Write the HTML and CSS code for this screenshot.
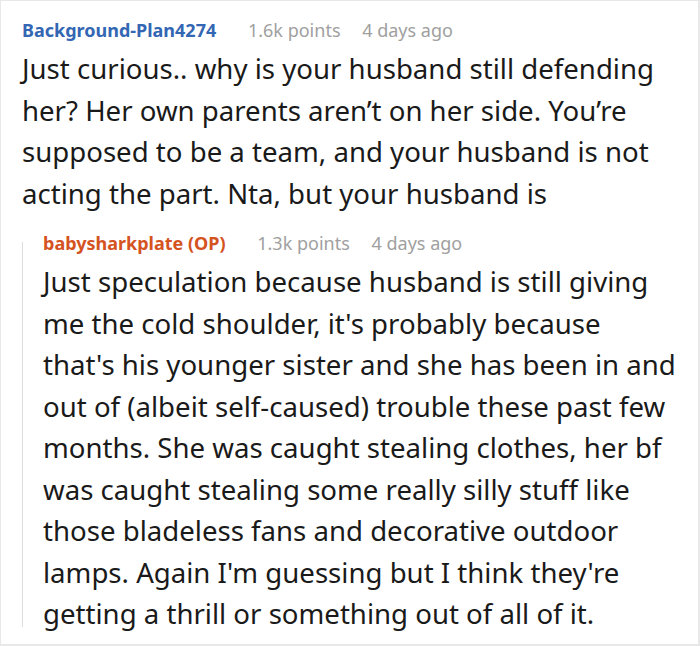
FILE: index.html
```html
<!DOCTYPE html>
<html>
<head>
<meta charset="utf-8">
<link rel="stylesheet" href="styles.css">
</head>
<body>
<div class="frame">
  <div class="comment">
    <div class="meta">
      <span class="user">Background-Plan4274</span>
      <span class="points">1.6k points</span>
      <span class="time">4 days ago</span>
    </div>
    <div class="body">Just curious.. why is your husband still defending her? Her own parents aren’t on her side. You’re supposed to be a team, and your husband is not acting the part. Nta, but your husband is</div>
    <div class="reply">
      <div class="meta">
        <span class="user op">babysharkplate (OP)</span>
        <span class="points">1.3k points</span>
        <span class="time">4 days ago</span>
      </div>
      <div class="body">Just speculation because husband is still giving me the cold shoulder, it's probably because that's his younger sister and she has been in and out of (albeit self-caused) trouble these past few months. She was caught stealing clothes, her bf was caught stealing some really silly stuff like those bladeless fans and decorative outdoor lamps. Again I'm guessing but I think they're getting a thrill or something out of all of it.</div>
    </div>
  </div>
</div>
</body>
</html>
```
FILE: styles.css
```css
html, body {
  margin: 0;
  padding: 0;
  background: #ffffff;
}
.frame {
  box-sizing: border-box;
  width: 700px;
  height: 646px;
  border: 2px solid #e8e8e8;
  border-width: 1px 2px 2px 1px;
  overflow: hidden;
  font-family: "Noto Sans", sans-serif;
  color: #1a1a1a;
}
.comment {
  padding: 16px 19px 0 21px;
}
.meta {
  font-size: 18px;
  line-height: 26px;
  white-space: nowrap;
}
.user {
  font-weight: 700;
  color: #3366b3;
}
.user.op {
  color: #d4531f;
}
.points {
  color: #a0a0a0;
  margin-left: 27px;
}
.time {
  color: #a0a0a0;
  margin-left: 17px;
}
.body {
  font-size: 27.6px;
  line-height: 41.5px;
  margin-top: 5px;
}
.reply {
  position: relative;
  margin-top: 16px;
  padding-left: 21px;
}
.reply::before {
  content: "";
  position: absolute;
  left: 0;
  top: 12px;
  bottom: 8px;
  width: 1px;
  background: #dddddd;
}
```
